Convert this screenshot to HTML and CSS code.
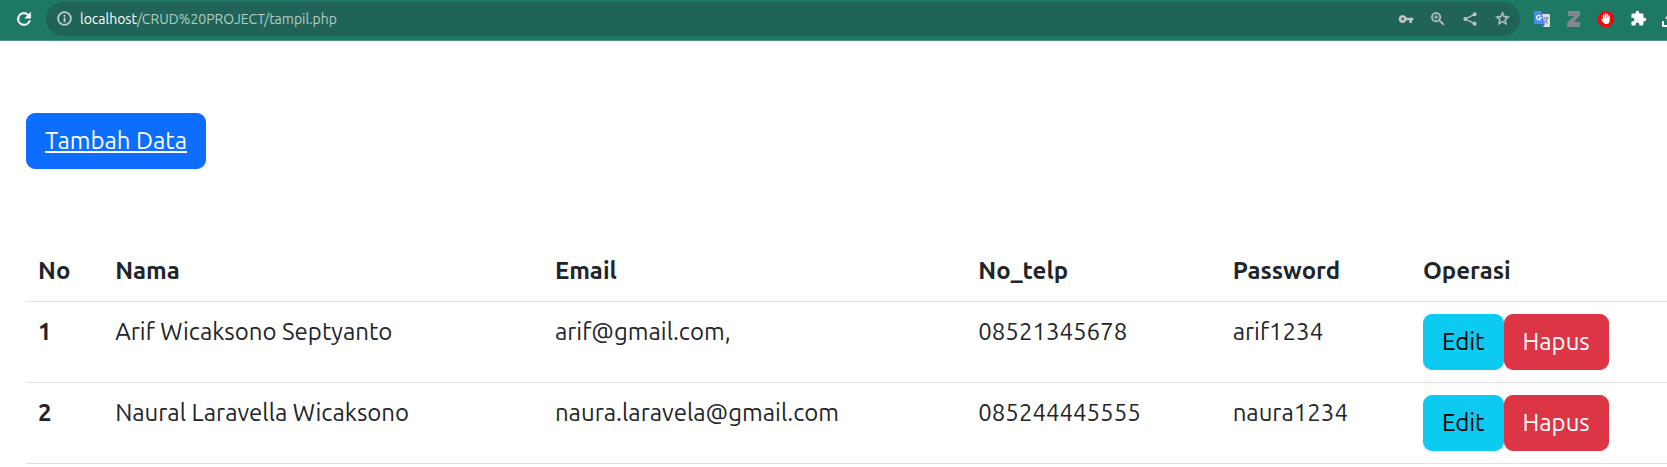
FILE: index.html
```html
<!DOCTYPE html>
<html lang="id">
<head>
<meta charset="utf-8">
<title>Tampil Data</title>
<link rel="stylesheet" href="styles.css">
</head>
<body>
<header class="toolbar">
  <button class="icon-btn reload" aria-label="Reload"><svg width="20" height="20" viewBox="0 0 24 24" fill="#fff"><path d="M17.65 6.35A7.96 7.96 0 0 0 12 4a8 8 0 1 0 7.73 10h-2.08A6 6 0 1 1 12 6c1.66 0 3.14.69 4.22 1.78L13 11h7V4z" stroke="#fff" stroke-width=".6"/></svg></button>
  <div class="omnibox">
    <svg width="17" height="17" viewBox="0 0 24 24" fill="#c3d3cf"><path d="M11 7h2v2h-2zm0 4h2v6h-2zm1-9a10 10 0 1 0 0 20 10 10 0 0 0 0-20zm0 18a8 8 0 1 1 0-16 8 8 0 0 1 0 16z" stroke="#c3d3cf" stroke-width=".5"/></svg>
    <div class="url"><span class="host">localhost</span>/CRUD%20PROJECT/tampil.php</div>
    <div class="actions">
      <button class="icon-btn" aria-label="Passwords"><svg width="16" height="16" viewBox="0 0 24 24" fill="#bdc4c1"><path d="M12.65 10A6 6 0 1 0 12.65 14H17v4h4v-4h2v-4zM7 14a2 2 0 1 1 0-4 2 2 0 0 1 0 4z"/></svg></button>
      <button class="icon-btn" aria-label="Zoom"><svg width="18" height="18" viewBox="0 0 24 24" fill="#bdc4c1"><path d="M15.5 14h-.79l-.28-.27A6.5 6.5 0 1 0 13.73 14.43l.27.28v.79l5 4.99L20.49 19zm-6 0a4.5 4.5 0 1 1 0-9 4.5 4.5 0 0 1 0 9zM12 10h-2v2H9v-2H7V9h2V7h1v2h2z" stroke="#bdc4c1" stroke-width=".4"/></svg></button>
      <button class="icon-btn" aria-label="Share"><svg width="16" height="16" viewBox="0 0 24 24" fill="#bdc4c1" stroke="#bdc4c1" stroke-width="2"><path d="M19 5 5 12l14 7" fill="none"/><circle cx="19" cy="5" r="2"/><circle cx="5" cy="12" r="2"/><circle cx="19" cy="19" r="2"/></svg></button>
      <button class="icon-btn" aria-label="Bookmark"><svg width="17" height="17" viewBox="0 0 24 24" fill="#bdc4c1"><path d="m22 9.24-7.19-.62L12 2 9.19 8.63 2 9.24l5.46 4.73L5.82 21 12 17.27 18.18 21l-1.63-7.03zM12 15.4l-3.76 2.27 1-4.28-3.32-2.88 4.38-.38L12 6.1l1.71 4.04 4.38.38-3.32 2.88 1 4.28z" stroke="#bdc4c1" stroke-width=".5"/></svg></button>
    </div>
  </div>
  <div class="extensions">
    <button class="icon-btn" aria-label="Translate"><svg width="16" height="16" viewBox="0 0 16 16"><path d="M6 3h9q1 0 1 1v11q0 1-1 1H9z" fill="#dce0e3"/><path d="M9.500 7h5M12 6v1M13.700 7q-1 3.500-4 5.500M10.500 8.500q1.200 2.500 3.500 4" stroke="#6c7b88" fill="none"/><path d="M1 0h6l4 13H1q-1 0-1-1V1q0-1 1-1z" fill="#4d8bf0"/><path d="M7 13h4l-2 3z" fill="#3463c4"/><path d="M6.400 5A2.200 2.200 0 1 0 7 6.600H5" stroke="#fff" stroke-width="1.200" fill="none"/></svg></button>
    <button class="icon-btn" aria-label="Zotero"><svg width="14" height="16" viewBox="0 0 14 16"><path d="M1 0h12v4L7 11h6v5H0v-4l7-7H1z" fill="#82898d"/></svg></button>
    <button class="icon-btn" aria-label="AdBlock"><svg width="16" height="16" viewBox="0 0 16 16"><path d="M4.700 0h6.600L16 4.700v6.600L11.300 16H4.700L0 11.300V4.700z" fill="#e30d12"/><path d="M5.500 8V4.500M7.300 7.500V3M9.100 7.500V3.300M10.900 8V5" stroke="#fff" stroke-width="1.400" stroke-linecap="round"/><path d="M4.800 7h6.800v2.500q0 3.500-3.300 3.500-2 0-3-1.500L3.300 8.700q.5-1 1.500 0z" fill="#fff"/></svg></button>
    <button class="icon-btn" aria-label="Extensions"><svg width="17" height="17" viewBox="0 0 24 24" fill="#fff"><path d="M20.500 11H19V7a2 2 0 0 0-2-2h-4V3.500a2.500 2.500 0 0 0-5 0V5H4a2 2 0 0 0-2 2v3.800h1.500a2.700 2.700 0 0 1 0 5.400H2V20a2 2 0 0 0 2 2h3.800v-1.500a2.700 2.700 0 0 1 5.400 0V22H17a2 2 0 0 0 2-2v-4h1.500a2.500 2.500 0 0 0 0-5z"/></svg></button>
    <button class="icon-btn" aria-label="Downloads"><svg width="18" height="18" viewBox="0 0 18 18" fill="none" stroke="#fff" stroke-width="2"><path d="M2 11v5h14v-5M9 1v9M5 7l4 4 4-4"/></svg></button>
  </div>
</header>
<main class="page">
  <button class="btn btn-primary"><a href="#tambah">Tambah Data</a></button>
  <table class="table">
    <colgroup><col class="c-no"><col class="c-nama"><col class="c-email"><col class="c-telp"><col class="c-pass"><col></colgroup>
    <thead>
      <tr><th scope="col">No</th><th scope="col">Nama</th><th scope="col">Email</th><th scope="col">No_telp</th><th scope="col">Password</th><th scope="col">Operasi</th></tr>
    </thead>
    <tbody>
      <tr><th scope="row">1</th><td>Arif Wicaksono Septyanto</td><td>arif@gmail.com,</td><td>08521345678</td><td>arif1234</td><td><div class="ops"><button class="btn btn-info">Edit</button><button class="btn btn-danger">Hapus</button></div></td></tr>
      <tr><th scope="row">2</th><td>Naural Laravella Wicaksono</td><td>naura.laravela@gmail.com</td><td>085244445555</td><td>naura1234</td><td><div class="ops"><button class="btn btn-info">Edit</button><button class="btn btn-danger">Hapus</button></div></td></tr>
    </tbody>
  </table>
</main>
</body>
</html>
```
FILE: styles.css
```css
* { box-sizing: border-box; }
body {
  margin: 0;
  background: #fff;
  color: #212529;
  font-family: Ubuntu, "Noto Sans", sans-serif;
  font-size: 24px;
  line-height: 36px;
  overflow-x: hidden;
}
.toolbar {
  display: flex;
  align-items: center;
  height: 41px;
  padding: 0 0 3px 8px;
  background: #1e7964;
  border-bottom: 1px solid #4b9383;
  overflow: hidden;
}
.icon-btn {
  display: flex;
  flex: none;
  align-items: center;
  justify-content: center;
  width: 32px;
  height: 32px;
  padding: 0;
  border: 0;
  background: none;
}
.omnibox {
  display: flex;
  flex: 1;
  align-items: center;
  height: 34px;
  margin-left: 6px;
  padding: 0 2px 0 10px;
  border-radius: 17px;
  background: #206457;
}
.url {
  flex: 1;
  margin-left: 7px;
  color: #b5cdc7;
  font-size: 14px;
  line-height: 20px;
}
.host { color: #fff; }
.actions { display: flex; }
.extensions {
  display: flex;
  margin: 0 -19px 0 6px;
}
.page { padding: 72px 0 0 26px; }
.btn {
  padding: 9px 18px;
  border: 1px solid transparent;
  border-radius: 9px;
  font: inherit;
}
.btn a { color: inherit; }
.btn-primary { background: #0d6efd; border-color: #0d6efd; color: #fff; }
.btn-info { background: #0dcaf0; border-color: #0dcaf0; color: #000; }
.btn-danger { background: #dc3545; border-color: #dc3545; color: #fff; }
.table {
  width: 100%;
  margin-top: 72px;
  border-collapse: collapse;
  table-layout: fixed;
}
.table th, .table td {
  padding: 12px;
  border-bottom: 1px solid #dee2e6;
  text-align: left;
  vertical-align: top;
}
.c-no { width: 4.7%; }
.c-nama { width: 26.8%; }
.c-email { width: 25.8%; }
.c-telp { width: 15.5%; }
.c-pass { width: 11.6%; }
.ops { display: flex; }
```
